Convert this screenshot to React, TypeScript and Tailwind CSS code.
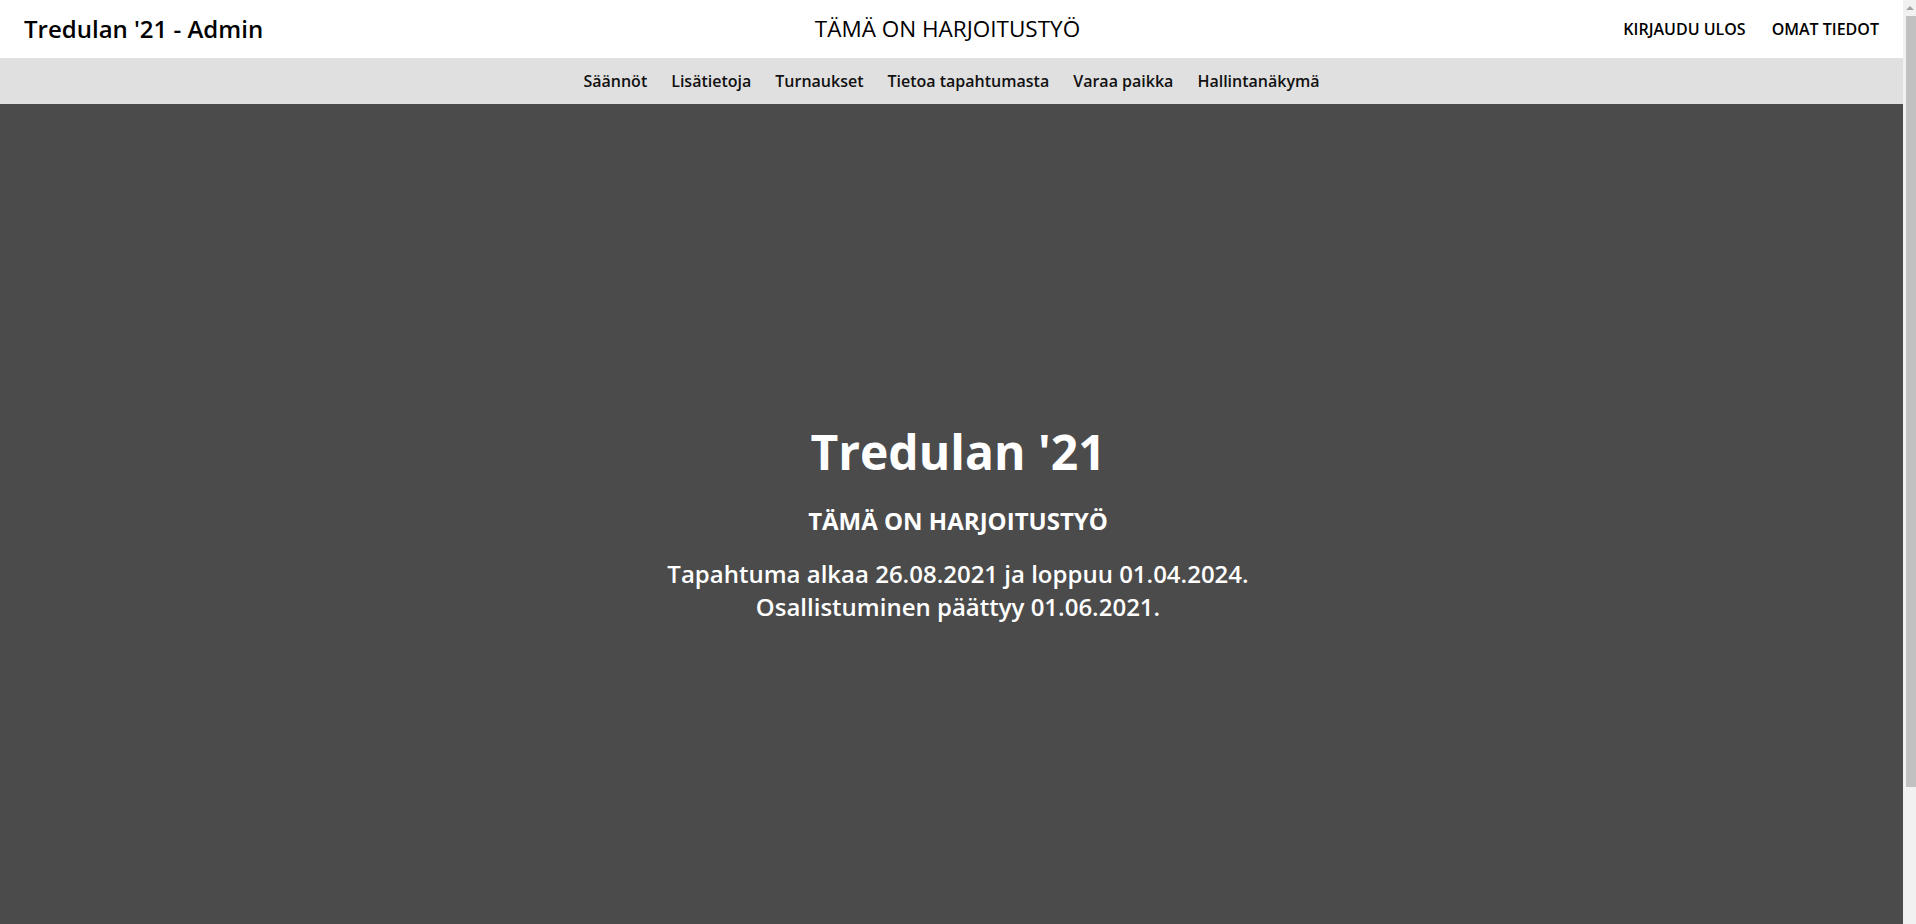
import React from "react"

// Navigation links in the sub bar
const navItems = ["Säännöt", "Lisätietoja", "Turnaukset", "Tietoa tapahtumasta", "Varaa paikka", "Hallintanäkymä"]

export default function App() {
    return (
        <div className="flex h-screen overflow-hidden bg-[#4b4b4b] font-['Open_Sans',sans-serif]">
            <div className="min-w-0 flex-1">
                <header className="grid h-[58px] grid-cols-3 items-center bg-white px-6">
                    <a href="#" className="justify-self-start text-[24px] font-semibold text-black">
                        Tredulan '21 - Admin
                    </a>
                    <div className="-translate-x-[4px] justify-self-center text-[22.5px] text-black">TÄMÄ ON HARJOITUSTYÖ</div>
                    <div className="flex items-center gap-[26px] justify-self-end text-[16px] font-semibold text-black">
                        <a href="#">KIRJAUDU ULOS</a>
                        <a href="#">OMAT TIEDOT</a>
                    </div>
                </header>
                <nav className="flex h-[46px] items-center justify-center gap-6 bg-[#e0e0e0] text-[16px] font-semibold text-[#111]">
                    {navItems.map((item) => (
                        <a key={item} href="#">
                            {item}
                        </a>
                    ))}
                </nav>
                {/* hero spans the whole viewport width, under the scrollbar */}
                <main className="flex h-[837px] w-screen flex-col items-center justify-center text-center text-white">
                    <h1 className="text-[48px] font-bold leading-[58px]">Tredulan '21</h1>
                    <h2 className="mt-6 text-[24px] font-bold leading-[32px]">TÄMÄ ON HARJOITUSTYÖ</h2>
                    <p className="mt-5 text-[24px] font-semibold leading-[33px]">
                        Tapahtuma alkaa 26.08.2021 ja loppuu 01.04.2024.
                        <br />
                        Osallistuminen päättyy 01.06.2021.
                    </p>
                </main>
            </div>
            {/* browser scrollbar as seen in the screenshot */}
            <div className="flex w-[13px] flex-col items-center bg-[#f1f1f1] pt-[6px]">
                <div className="h-0 w-0 border-x-[4px] border-b-[4px] border-x-transparent border-b-[#a3a3a3]" />
                <div className="mt-[6px] ml-[2px] h-[771px] w-[10px] bg-[#c1c1c1]" />
            </div>
        </div>
    )
}
